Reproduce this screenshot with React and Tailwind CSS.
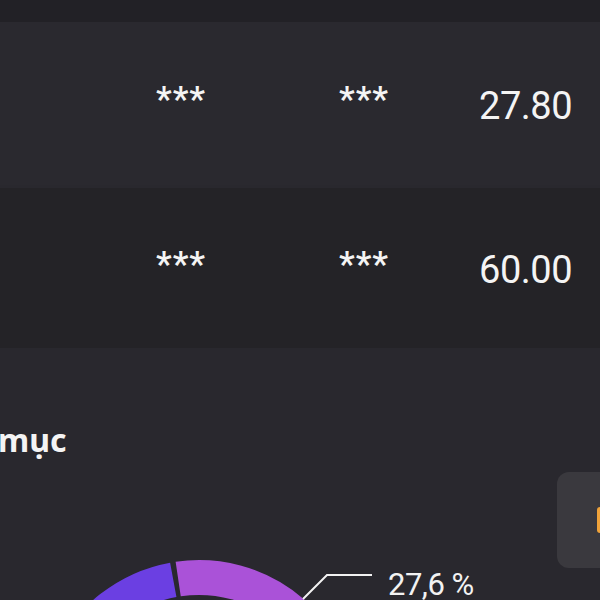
const rows = [
  { a: '***', b: '***', value: '27.80', bg: 'bg-[#2a292f]', h: 'h-[163px]' },
  { a: '***', b: '***', value: '60.00', bg: 'bg-[#242327]', h: 'h-[160px]' },
];

function polar(cx, cy, r, deg) {
  const rad = (deg * Math.PI) / 180;
  return [cx + r * Math.sin(rad), cy - r * Math.cos(rad)];
}

function arc(cx, cy, r, from, to) {
  const [x1, y1] = polar(cx, cy, r, from);
  const [x2, y2] = polar(cx, cy, r, to);
  const large = to - from > 180 ? 1 : 0;
  return `M ${x1} ${y1} A ${r} ${r} 0 ${large} 1 ${x2} ${y2}`;
}

function Donut() {
  const cx = 199;
  const cy = 248;
  return (
    <svg width="557" height="128" viewBox="0 0 557 128" className="block shrink-0">
      <path d={arc(cx, cy, 142.5, -130, -10.4)} stroke="#6b3fe2" strokeWidth="35" fill="none" />
      <path d={arc(cx, cy, 142.5, -8.4, 90)} stroke="#aa52d8" strokeWidth="35" fill="none" />
      <polyline points="303,127 327,103 372,103" stroke="#f2f2f2" strokeWidth="2" fill="none" />
      <text x="388" y="123" fill="#f2f2f2" fontSize="31" letterSpacing="-0.5" fontFamily="Roboto, sans-serif">27,6 %</text>
    </svg>
  );
}

export default function App() {
  return (
    <div className="w-[600px] h-[600px] overflow-hidden bg-[#29282e] text-[#f4f4f4] font-['Roboto',sans-serif]">
      <div className="h-[22px] bg-[#222126]" />
      {rows.map((r, i) => (
        <div key={i} className={`flex items-center ${r.h} ${r.bg} ${i > 0 ? 'mt-[3px]' : ''}`}>
          <div className="w-[110px]" />
          <div className="w-[142px] text-center text-[35px] font-semibold leading-none tracking-[1px] -mt-[8px]">{r.a}</div>
          <div className="w-[224px] text-center text-[35px] font-semibold leading-none tracking-[1px] -mt-[8px]">{r.b}</div>
          <div className="flex-1 text-right pr-[28px] text-[38px] leading-none tracking-[-0.5px] mt-[4px]">{r.value}</div>
        </div>
      ))}
      <div className="pt-[76px]">
        <div className="h-[48px] -ml-[2px] text-[32px] font-bold leading-none font-['Noto_Sans',sans-serif]">mục</div>
        <div className="flex items-start">
          <Donut />
          <div className="w-[100px] h-[96px] rounded-[12px] bg-[#3a393e] pl-[40px] pt-[35px] shrink-0">
            <div className="w-[20px] h-[26px] rounded-[3px] bg-[#f0a33a]" />
          </div>
        </div>
      </div>
    </div>
  );
}
